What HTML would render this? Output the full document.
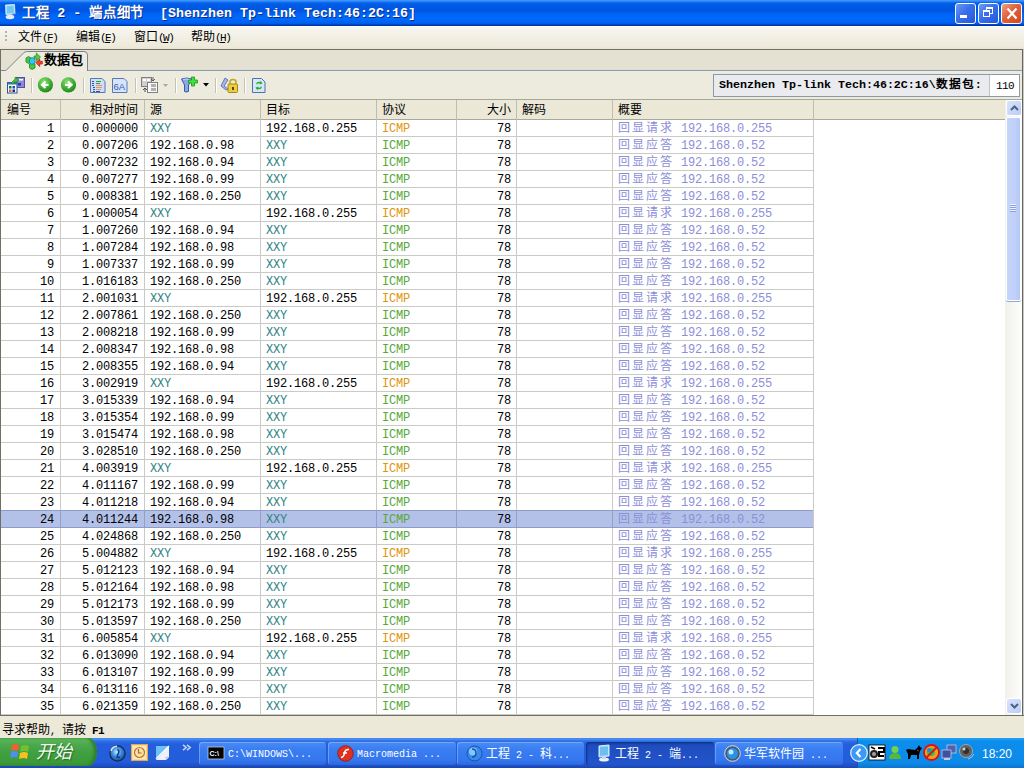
<!DOCTYPE html>
<html lang="zh-CN"><head><meta charset="utf-8">
<style>
*{margin:0;padding:0;box-sizing:border-box}
html,body{width:1024px;height:768px;overflow:hidden;background:#ECE9D8;font-family:"Liberation Mono",monospace;font-size:12px;line-height:14px;color:#000;position:relative}
.a{position:absolute;white-space:nowrap}
svg{position:absolute;overflow:visible}
#title{position:absolute;left:0;top:0;width:1024px;height:26px;background:linear-gradient(#3D95FF 0px,#3A90FE 1px,#1A72F2 2px,#0262EC 3px,#005BE2 5px,#0057DF 8px,#0056E6 11px,#0063F5 14px,#0069FC 18px,#0064F4 22px,#0058E6 24px,#0038A8 25px,#0038A8 26px)}
#title .t{position:absolute;left:22px;top:7px;color:#fff;font-weight:bold;font-size:13.33px;white-space:pre;text-shadow:1px 1px 0 #0A2A8A}
.cj{letter-spacing:0.67px}
.k{font-weight:normal;font-size:12px}
.wb{position:absolute;top:3px;width:21px;height:21px;border:1px solid #fff;border-radius:3px;background:linear-gradient(135deg,#6A9AF8 0%,#3A6FEA 45%,#2458DE 100%)}
#menu{position:absolute;left:0;top:26px;width:1024px;height:23px;background:linear-gradient(#FCFCFA 0px,#F6F5EE 3px,#F1EFE4 12px,#EEEBDC 20px,#E8E5D4 23px)}
#menu .m{position:absolute;top:5px;font-size:12px}
.mn{display:inline-block;letter-spacing:-1.5px;font-size:11px;text-decoration:none}
.dot{position:absolute;width:2px;height:2px;background:#B4B2A8}
#tabs{position:absolute;left:0;top:49px;width:1024px;height:22px;background:#E4E1D2;border-top:1px solid #716F64}
#tb{position:absolute;left:0;top:71px;width:1024px;height:28px;background:#EDEBDD}
.sep{position:absolute;top:7px;width:1px;height:15px;background:#C5C2B2;box-shadow:1px 0 0 #fff}
#hdr{position:absolute;left:1px;top:99px;width:1004px;height:21px;background:#EBE8D8;border-top:1px solid #A8A696;border-bottom:1px solid #ACA899}
#hdr i{position:absolute;top:4px;font-style:normal;white-space:nowrap;font-size:12px}
.hs{position:absolute;top:0;width:1px;height:20px;background:#C0BDAC}
#grid{position:absolute;left:1px;top:120px;width:1004px;height:595px;background:#fff;overflow:hidden}
.row{position:absolute;left:0;width:812px;height:17px;border-bottom:1px solid #CACAC6}
.row i{position:absolute;top:2px;font-style:normal;white-space:nowrap;font-size:12px;letter-spacing:-0.2px}
.sel{background:#B3C1E9;border-top:1px solid #8E9CCB;border-bottom:1px solid #8E9CCB;margin-top:-1px;height:18px}
.sel i{top:2px}
.c0{right:759px}.c1{right:675px}.c2{left:149px}.c3{left:265px}.c4{left:381px}.c5{right:302px}.c7{left:617px;color:#8C8ED8}.c7 b{font-weight:normal;letter-spacing:2px}
.xxy{color:#2E8484}.oran{color:#E0960C}.grn{color:#58A838}
.vl{position:absolute;top:0;width:1px;height:595px;background:#CACAC6;z-index:1}
.sv{position:absolute;top:-1px;width:1px;height:18px;background:#949FC8;z-index:2}
#lb{position:absolute;left:0;top:49px;width:1px;height:667px;background:#716F64}
#rb{position:absolute;left:1022px;top:49px;width:2px;height:667px;background:linear-gradient(90deg,#666662 50%,#C8C8C4 50%)}
#bb{position:absolute;left:0;top:715px;width:1024px;height:1px;background:#716F64}
#sb{position:absolute;left:1005px;top:99px;width:17px;height:616px;border-top:1px solid #A8A696;background:linear-gradient(90deg,#F1F0EA,#FEFEFC)}
.sbb{position:absolute;left:2px;width:14px;height:14px;border-radius:2px;background:linear-gradient(135deg,#D9E3FC,#BACDF8);box-shadow:0 0 0 1px #fff}
#status{position:absolute;left:0;top:716px;width:1024px;height:22px;background:#ECE9D8}
#task{position:absolute;left:0;top:738px;width:1024px;height:30px;background:linear-gradient(#3A7FF0 0px,#4A93F5 1px,#3070E8 3px,#245EDC 6px,#245DDA 24px,#1D4EC4 28px,#1A45B0 30px)}
.btn{position:absolute;top:4px;height:23px;border-radius:3px;background:linear-gradient(#4A8CF6,#3A7EF2 30%,#3476EE 80%,#2C68DC);box-shadow:inset 1px 1px 0 rgba(255,255,255,.25)}
.btn .tx{position:absolute;top:6px;color:#fff;font-size:10px}
#tray{position:absolute;left:857px;top:0;width:167px;height:30px;background:linear-gradient(#22A6F8 0px,#0C8DEC 3px,#0D8AE8 25px,#0B74D0 30px);border-left:1px solid #1750B8}
</style></head><body>
<div id="title">
<svg style="left:5px;top:4px" width="11" height="16" viewBox="0 0 11 16"><path d="M0.5 1 L9.5 0.5 L10 10 L1 10.5 Z" fill="#B0E0F8" stroke="#D8F4FF" stroke-width=".8"/><path d="M1.8 2.2 L8.5 1.8 L8.8 9 L2 9.3Z" fill="#70C8F0"/><path d="M7 10 L10 9 L9 13 Z" fill="#4050A0" opacity=".6"/><ellipse cx="5" cy="13" rx="4.3" ry="2.2" fill="#E8E8F4"/></svg>
<div class="t"><b class="cj">工程</b> 2 - <b class="cj">端点细节</b>  [Shenzhen Tp-link Tech:46:2C:16]</div>
<div class="wb" style="left:955px"><div class="a" style="left:4px;top:11px;width:7px;height:3px;background:#fff"></div></div>
<div class="wb" style="left:978px"><div class="a" style="left:7px;top:3px;width:7px;height:7px;border:1px solid #fff;border-top-width:2px"></div><div class="a" style="left:4px;top:6px;width:7px;height:7px;border:1px solid #fff;border-top-width:2px;background:#3A6FEA"></div></div>
<div class="wb" style="left:1001px;background:linear-gradient(135deg,#F0A080 0%,#E2603A 45%,#D04A22 100%)"><svg style="left:4px;top:3px" width="12" height="13"><path d="M1.5 1.5 L10.5 11.5 M10.5 1.5 L1.5 11.5" stroke="#fff" stroke-width="2.2"/></svg></div>
</div>
<div id="menu">
<div class="dot" style="left:5px;top:5px"></div><div class="dot" style="left:5px;top:9px"></div><div class="dot" style="left:5px;top:13px"></div>
<span class="m" style="left:18px">文件<span class="mn">(<u>F</u>)</span></span><span class="m" style="left:76px">编辑<span class="mn">(<u>E</u>)</span></span><span class="m" style="left:134px">窗口<span class="mn">(<u>W</u>)</span></span><span class="m" style="left:191px">帮助<span class="mn">(<u>H</u>)</span></span></div>
<div id="tabs">
<svg style="left:0;top:0" width="100" height="22"><path d="M1 20.5 L6 20.5 L23.5 3 Q25 1.5 27.5 1.5 L84 1.5 Q87.5 1.5 87.5 5 L87.5 22 L1 22 Z" fill="#EEEBDF" stroke="#7C8490" stroke-width="1"/><path d="M0 21.5 L89 21.5" stroke="#EDEBDD" stroke-width="1"/></svg>
<svg style="left:22px;top:0" width="24" height="22" viewBox="22 50 24 22"><path d="M26 58 L28.5 56.5 L31 58 L31 62 L28.5 63.5 L26 62Z" fill="#48C838" stroke="#208818" stroke-width=".8"/><path d="M29.5 64 L32 62.5 L35 64 L35 68 L32 69.5 L29.5 68Z" fill="#48C838" stroke="#208818" stroke-width=".8"/><path d="M29.5 59 L32 57.5 L35 59 L35 63 L32 64.5 L29.5 63Z" fill="#30C8F0" stroke="#1880B0" stroke-width=".8"/><path d="M34 56 L36.3 56 L36.3 53 L40.5 57 L36.3 60.8 L36.3 58.2 L34 58.2Z" fill="#50D040" stroke="#1E8A1E" stroke-width=".7"/><path d="M42.3 61.3 L39.7 61.3 L39.7 58.8 L35.8 62.6 L39.7 66.6 L39.7 64 L42.3 64Z" fill="#F04828" stroke="#A01810" stroke-width=".7"/></svg>
<span class="a" style="left:44px;top:4px;font-weight:bold;font-size:13px">数据包</span>
<div class="a" style="left:88px;top:20px;width:936px;height:1px;background:#8E9AAE"></div><div class="a" style="left:88px;top:19px;width:936px;height:1px;background:#DCDED8"></div>
</div>
<div id="tb">
<svg style="left:7px;top:6px" width="18" height="17" viewBox="0 0 18 17"><rect x="9.5" y="0.5" width="8" height="10" fill="#8A8AD8" stroke="#5050A8"/><rect x="12" y="2" width="4" height="1.5" fill="#fff"/><rect x="11" y="6" width="3" height="2.5" fill="#3838A0"/><rect x="0.5" y="5.5" width="9.5" height="10.5" fill="#F4F8FF" stroke="#3050A0"/><rect x="0.5" y="5.5" width="9.5" height="2" fill="#4A6AC8"/><rect x="2" y="9" width="2.5" height="2.5" fill="#108040"/><rect x="5.5" y="9" width="2.5" height="2.5" fill="#2050C0"/><rect x="2" y="12.5" width="2.5" height="2.5" fill="#D07050"/><rect x="5.5" y="12.5" width="2.5" height="2.5" fill="#182880"/><path d="M4 6 L8 2 L8 0 L12 3 L8 6.5 L8 4.5 L6 7Z" fill="#40C040" stroke="#208020" stroke-width=".6"/></svg>
<div class="sep" style="left:31px"></div>
<svg style="left:37px;top:6px" width="17" height="16" viewBox="0 0 17 16"><defs><radialGradient id="gg" cx=".4" cy=".3" r=".8"><stop offset="0" stop-color="#8CE070"/><stop offset=".6" stop-color="#38A830"/><stop offset="1" stop-color="#1C7A18"/></radialGradient></defs><circle cx="8.4" cy="7.8" r="7.6" fill="url(#gg)"/><path d="M11.5 7.8 H5.5 M8.5 4.5 L5 7.8 L8.5 11" stroke="#fff" stroke-width="2.2" fill="none"/></svg>
<svg style="left:60px;top:6px" width="17" height="16" viewBox="0 0 17 16"><circle cx="8.5" cy="7.8" r="7.6" fill="url(#gg)"/><path d="M5 7.8 H11 M8 4.5 L11.5 7.8 L8 11" stroke="#fff" stroke-width="2.2" fill="none"/></svg>
<div class="sep" style="left:83px"></div>
<svg style="left:90px;top:7px" width="16" height="15" viewBox="0 0 16 15"><path d="M0.5 0.5 H12 L15 3.5 V14.5 H0.5Z" fill="#CCE0FA" stroke="#5A78B0"/><path d="M2 3.5h2M2 5.5h2M2 7.5h2M3 9.5h2M3 11.5h2M3 13.5h2M6 13.5h4" stroke="#3050A0" fill="none"/><path d="M6 3.5h5M6 5.5h4" stroke="#30A040" fill="none"/><path d="M6 7.5h6M6 9.5h6M6 11.5h5" stroke="#E89060" fill="none"/></svg>
<svg style="left:112px;top:7px" width="16" height="15" viewBox="0 0 16 15"><path d="M0.5 0.5 H12 L15 3.5 V14.5 H0.5Z" fill="#D4E4FC" stroke="#5A78B0"/><text x="1.5" y="11.5" font-family="Liberation Sans" font-size="9.5" fill="#3A5AB0">6A</text></svg>
<div class="sep" style="left:135px"></div>
<svg style="left:141px;top:6px" width="17" height="16" viewBox="0 0 17 16"><rect x="0.5" y="0.5" width="10" height="9" fill="#D0D0D0" stroke="#808080"/><rect x="2" y="2" width="3" height="2" fill="#fff"/><rect x="6" y="2" width="3" height="2" fill="#fff"/><rect x="6.5" y="5.5" width="10" height="10" fill="#F8F8F8" stroke="#808080"/><rect x="10" y="7" width="5" height="3" fill="#B0B0B0"/><rect x="10" y="11" width="5" height="3" fill="#B0B0B0"/><path d="M12 0 V4 M10 2 L12 4 L14 2" stroke="#606060" fill="none"/><path d="M4 15 V11 M2 13 L4 11 L6 13" stroke="#505050" fill="none"/></svg>
<svg style="left:163px;top:13px" width="6" height="3"><path d="M0 0 H5 L2.5 3Z" fill="#A8A8A0"/></svg>
<div class="sep" style="left:175px"></div>
<svg style="left:181px;top:5px" width="17" height="17" viewBox="0 0 17 17"><path d="M0.5 3 Q5 1 11 3 L7.5 9 V15.5 Q5 16.5 3.5 15.5 V9 Z" fill="#8AA8E8" stroke="#3A5AA8"/><path d="M2 3.5 Q5 2.5 9 3.5" stroke="#C0D8FF" fill="none"/><path d="M10.5 1 H13.5 V4 H16.5 V7 H13.5 V10 H10.5 V7 H7.5 V4 H10.5Z" fill="#40E040" stroke="#189818" stroke-width=".8"/></svg>
<svg style="left:203px;top:12px" width="6" height="4"><path d="M0 0 H6 L3 3.5Z" fill="#000"/></svg>
<div class="sep" style="left:215px"></div>
<svg style="left:220px;top:6px" width="18" height="16" viewBox="0 0 18 16"><path d="M5 1 L8 3 L4 9 L8 12 L6 13 L1 9 Z" fill="#A8B8E8" stroke="#5060A8" stroke-width=".8"/><path d="M10 7 V5 Q10 2.5 13 2.5 Q16 2.5 16 5 V7" stroke="#C8A818" stroke-width="1.6" fill="none"/><rect x="8" y="7" width="9.5" height="8.5" rx="1" fill="#E8D040" stroke="#A88810"/><path d="M12 10h2v3h-2z" fill="#604800"/></svg>
<div class="sep" style="left:244px"></div>
<svg style="left:252px;top:7px" width="14" height="15" viewBox="0 0 14 15"><path d="M0.5 0.5 H9.5 L13 4 V14.5 H0.5Z" fill="#D8E6FA" stroke="#5070B0"/><path d="M4 6 Q5 3 8.5 4 L8.5 2.5 L10.5 5.5 L7 6.5 L8 5.5 Q6 4.5 5 6.5Z" fill="#20B020"/><path d="M10 9 Q9 12 5.5 11 L5.5 12.5 L3.5 9.5 L7 8.5 L6 9.5 Q8 10.5 9 8.5Z" fill="#20B020"/></svg>

<div class="a" style="left:713px;top:3px;width:307px;height:23px;background:#E9EBEF;border:1px solid #8C9AA6"></div>
<div class="a" style="left:989px;top:4px;width:30px;height:21px;background:#fff;border-left:1px solid #B8C2CC"></div>
<span class="a" style="left:719px;top:7px;font-weight:bold;font-size:11.67px">Shenzhen Tp-link Tech:46:2C:16\<b style="letter-spacing:1px">数据包</b>:</span>
<span class="a" style="left:996px;top:8px;font-size:11px;letter-spacing:-0.6px">110</span>
</div>
<div id="hdr"><i style="left:6px">编号</i><i style="right:867px">相对时间</i><i style="left:149px">源</i><i style="left:265px">目标</i><i style="left:381px">协议</i><i style="right:494px">大小</i><i style="left:521px">解码</i><i style="left:617px">概要</i>
<div class="hs" style="left:59px"></div><div class="hs" style="left:143px"></div><div class="hs" style="left:259px"></div><div class="hs" style="left:375px"></div><div class="hs" style="left:455px"></div><div class="hs" style="left:515px"></div><div class="hs" style="left:611px"></div><div class="hs" style="left:812px"></div>
</div>
<div id="grid">
<div class="vl" style="left:59px"></div><div class="vl" style="left:143px"></div><div class="vl" style="left:259px"></div><div class="vl" style="left:375px"></div><div class="vl" style="left:455px"></div><div class="vl" style="left:515px"></div><div class="vl" style="left:611px"></div><div class="vl" style="left:812px"></div>
<div class="row" style="top:0px"><i class="c0">1</i><i class="c1">0.000000</i><i class="c2"><span class="xxy">XXY</span></i><i class="c3">192.168.0.255</i><i class="c4"><span class="oran">ICMP</span></i><i class="c5">78</i><i class="c7"><b>回显请求</b> 192.168.0.255</i></div>
<div class="row" style="top:17px"><i class="c0">2</i><i class="c1">0.007206</i><i class="c2">192.168.0.98</i><i class="c3"><span class="xxy">XXY</span></i><i class="c4"><span class="grn">ICMP</span></i><i class="c5">78</i><i class="c7"><b>回显应答</b> 192.168.0.52</i></div>
<div class="row" style="top:34px"><i class="c0">3</i><i class="c1">0.007232</i><i class="c2">192.168.0.94</i><i class="c3"><span class="xxy">XXY</span></i><i class="c4"><span class="grn">ICMP</span></i><i class="c5">78</i><i class="c7"><b>回显应答</b> 192.168.0.52</i></div>
<div class="row" style="top:51px"><i class="c0">4</i><i class="c1">0.007277</i><i class="c2">192.168.0.99</i><i class="c3"><span class="xxy">XXY</span></i><i class="c4"><span class="grn">ICMP</span></i><i class="c5">78</i><i class="c7"><b>回显应答</b> 192.168.0.52</i></div>
<div class="row" style="top:68px"><i class="c0">5</i><i class="c1">0.008381</i><i class="c2">192.168.0.250</i><i class="c3"><span class="xxy">XXY</span></i><i class="c4"><span class="grn">ICMP</span></i><i class="c5">78</i><i class="c7"><b>回显应答</b> 192.168.0.52</i></div>
<div class="row" style="top:85px"><i class="c0">6</i><i class="c1">1.000054</i><i class="c2"><span class="xxy">XXY</span></i><i class="c3">192.168.0.255</i><i class="c4"><span class="oran">ICMP</span></i><i class="c5">78</i><i class="c7"><b>回显请求</b> 192.168.0.255</i></div>
<div class="row" style="top:102px"><i class="c0">7</i><i class="c1">1.007260</i><i class="c2">192.168.0.94</i><i class="c3"><span class="xxy">XXY</span></i><i class="c4"><span class="grn">ICMP</span></i><i class="c5">78</i><i class="c7"><b>回显应答</b> 192.168.0.52</i></div>
<div class="row" style="top:119px"><i class="c0">8</i><i class="c1">1.007284</i><i class="c2">192.168.0.98</i><i class="c3"><span class="xxy">XXY</span></i><i class="c4"><span class="grn">ICMP</span></i><i class="c5">78</i><i class="c7"><b>回显应答</b> 192.168.0.52</i></div>
<div class="row" style="top:136px"><i class="c0">9</i><i class="c1">1.007337</i><i class="c2">192.168.0.99</i><i class="c3"><span class="xxy">XXY</span></i><i class="c4"><span class="grn">ICMP</span></i><i class="c5">78</i><i class="c7"><b>回显应答</b> 192.168.0.52</i></div>
<div class="row" style="top:153px"><i class="c0">10</i><i class="c1">1.016183</i><i class="c2">192.168.0.250</i><i class="c3"><span class="xxy">XXY</span></i><i class="c4"><span class="grn">ICMP</span></i><i class="c5">78</i><i class="c7"><b>回显应答</b> 192.168.0.52</i></div>
<div class="row" style="top:170px"><i class="c0">11</i><i class="c1">2.001031</i><i class="c2"><span class="xxy">XXY</span></i><i class="c3">192.168.0.255</i><i class="c4"><span class="oran">ICMP</span></i><i class="c5">78</i><i class="c7"><b>回显请求</b> 192.168.0.255</i></div>
<div class="row" style="top:187px"><i class="c0">12</i><i class="c1">2.007861</i><i class="c2">192.168.0.250</i><i class="c3"><span class="xxy">XXY</span></i><i class="c4"><span class="grn">ICMP</span></i><i class="c5">78</i><i class="c7"><b>回显应答</b> 192.168.0.52</i></div>
<div class="row" style="top:204px"><i class="c0">13</i><i class="c1">2.008218</i><i class="c2">192.168.0.99</i><i class="c3"><span class="xxy">XXY</span></i><i class="c4"><span class="grn">ICMP</span></i><i class="c5">78</i><i class="c7"><b>回显应答</b> 192.168.0.52</i></div>
<div class="row" style="top:221px"><i class="c0">14</i><i class="c1">2.008347</i><i class="c2">192.168.0.98</i><i class="c3"><span class="xxy">XXY</span></i><i class="c4"><span class="grn">ICMP</span></i><i class="c5">78</i><i class="c7"><b>回显应答</b> 192.168.0.52</i></div>
<div class="row" style="top:238px"><i class="c0">15</i><i class="c1">2.008355</i><i class="c2">192.168.0.94</i><i class="c3"><span class="xxy">XXY</span></i><i class="c4"><span class="grn">ICMP</span></i><i class="c5">78</i><i class="c7"><b>回显应答</b> 192.168.0.52</i></div>
<div class="row" style="top:255px"><i class="c0">16</i><i class="c1">3.002919</i><i class="c2"><span class="xxy">XXY</span></i><i class="c3">192.168.0.255</i><i class="c4"><span class="oran">ICMP</span></i><i class="c5">78</i><i class="c7"><b>回显请求</b> 192.168.0.255</i></div>
<div class="row" style="top:272px"><i class="c0">17</i><i class="c1">3.015339</i><i class="c2">192.168.0.94</i><i class="c3"><span class="xxy">XXY</span></i><i class="c4"><span class="grn">ICMP</span></i><i class="c5">78</i><i class="c7"><b>回显应答</b> 192.168.0.52</i></div>
<div class="row" style="top:289px"><i class="c0">18</i><i class="c1">3.015354</i><i class="c2">192.168.0.99</i><i class="c3"><span class="xxy">XXY</span></i><i class="c4"><span class="grn">ICMP</span></i><i class="c5">78</i><i class="c7"><b>回显应答</b> 192.168.0.52</i></div>
<div class="row" style="top:306px"><i class="c0">19</i><i class="c1">3.015474</i><i class="c2">192.168.0.98</i><i class="c3"><span class="xxy">XXY</span></i><i class="c4"><span class="grn">ICMP</span></i><i class="c5">78</i><i class="c7"><b>回显应答</b> 192.168.0.52</i></div>
<div class="row" style="top:323px"><i class="c0">20</i><i class="c1">3.028510</i><i class="c2">192.168.0.250</i><i class="c3"><span class="xxy">XXY</span></i><i class="c4"><span class="grn">ICMP</span></i><i class="c5">78</i><i class="c7"><b>回显应答</b> 192.168.0.52</i></div>
<div class="row" style="top:340px"><i class="c0">21</i><i class="c1">4.003919</i><i class="c2"><span class="xxy">XXY</span></i><i class="c3">192.168.0.255</i><i class="c4"><span class="oran">ICMP</span></i><i class="c5">78</i><i class="c7"><b>回显请求</b> 192.168.0.255</i></div>
<div class="row" style="top:357px"><i class="c0">22</i><i class="c1">4.011167</i><i class="c2">192.168.0.99</i><i class="c3"><span class="xxy">XXY</span></i><i class="c4"><span class="grn">ICMP</span></i><i class="c5">78</i><i class="c7"><b>回显应答</b> 192.168.0.52</i></div>
<div class="row" style="top:374px"><i class="c0">23</i><i class="c1">4.011218</i><i class="c2">192.168.0.94</i><i class="c3"><span class="xxy">XXY</span></i><i class="c4"><span class="grn">ICMP</span></i><i class="c5">78</i><i class="c7"><b>回显应答</b> 192.168.0.52</i></div>
<div class="row sel" style="top:391px"><i class="c0">24</i><i class="c1">4.011244</i><i class="c2">192.168.0.98</i><i class="c3"><span class="xxy">XXY</span></i><i class="c4"><span class="grn">ICMP</span></i><i class="c5">78</i><i class="c7"><b>回显应答</b> 192.168.0.52</i><div class="sv" style="left:59px"></div><div class="sv" style="left:143px"></div><div class="sv" style="left:259px"></div><div class="sv" style="left:375px"></div><div class="sv" style="left:455px"></div><div class="sv" style="left:515px"></div><div class="sv" style="left:611px"></div></div>
<div class="row" style="top:408px"><i class="c0">25</i><i class="c1">4.024868</i><i class="c2">192.168.0.250</i><i class="c3"><span class="xxy">XXY</span></i><i class="c4"><span class="grn">ICMP</span></i><i class="c5">78</i><i class="c7"><b>回显应答</b> 192.168.0.52</i></div>
<div class="row" style="top:425px"><i class="c0">26</i><i class="c1">5.004882</i><i class="c2"><span class="xxy">XXY</span></i><i class="c3">192.168.0.255</i><i class="c4"><span class="oran">ICMP</span></i><i class="c5">78</i><i class="c7"><b>回显请求</b> 192.168.0.255</i></div>
<div class="row" style="top:442px"><i class="c0">27</i><i class="c1">5.012123</i><i class="c2">192.168.0.94</i><i class="c3"><span class="xxy">XXY</span></i><i class="c4"><span class="grn">ICMP</span></i><i class="c5">78</i><i class="c7"><b>回显应答</b> 192.168.0.52</i></div>
<div class="row" style="top:459px"><i class="c0">28</i><i class="c1">5.012164</i><i class="c2">192.168.0.98</i><i class="c3"><span class="xxy">XXY</span></i><i class="c4"><span class="grn">ICMP</span></i><i class="c5">78</i><i class="c7"><b>回显应答</b> 192.168.0.52</i></div>
<div class="row" style="top:476px"><i class="c0">29</i><i class="c1">5.012173</i><i class="c2">192.168.0.99</i><i class="c3"><span class="xxy">XXY</span></i><i class="c4"><span class="grn">ICMP</span></i><i class="c5">78</i><i class="c7"><b>回显应答</b> 192.168.0.52</i></div>
<div class="row" style="top:493px"><i class="c0">30</i><i class="c1">5.013597</i><i class="c2">192.168.0.250</i><i class="c3"><span class="xxy">XXY</span></i><i class="c4"><span class="grn">ICMP</span></i><i class="c5">78</i><i class="c7"><b>回显应答</b> 192.168.0.52</i></div>
<div class="row" style="top:510px"><i class="c0">31</i><i class="c1">6.005854</i><i class="c2"><span class="xxy">XXY</span></i><i class="c3">192.168.0.255</i><i class="c4"><span class="oran">ICMP</span></i><i class="c5">78</i><i class="c7"><b>回显请求</b> 192.168.0.255</i></div>
<div class="row" style="top:527px"><i class="c0">32</i><i class="c1">6.013090</i><i class="c2">192.168.0.94</i><i class="c3"><span class="xxy">XXY</span></i><i class="c4"><span class="grn">ICMP</span></i><i class="c5">78</i><i class="c7"><b>回显应答</b> 192.168.0.52</i></div>
<div class="row" style="top:544px"><i class="c0">33</i><i class="c1">6.013107</i><i class="c2">192.168.0.99</i><i class="c3"><span class="xxy">XXY</span></i><i class="c4"><span class="grn">ICMP</span></i><i class="c5">78</i><i class="c7"><b>回显应答</b> 192.168.0.52</i></div>
<div class="row" style="top:561px"><i class="c0">34</i><i class="c1">6.013116</i><i class="c2">192.168.0.98</i><i class="c3"><span class="xxy">XXY</span></i><i class="c4"><span class="grn">ICMP</span></i><i class="c5">78</i><i class="c7"><b>回显应答</b> 192.168.0.52</i></div>
<div class="row" style="top:578px"><i class="c0">35</i><i class="c1">6.021359</i><i class="c2">192.168.0.250</i><i class="c3"><span class="xxy">XXY</span></i><i class="c4"><span class="grn">ICMP</span></i><i class="c5">78</i><i class="c7"><b>回显应答</b> 192.168.0.52</i></div>
</div>
<div id="sb">
<div class="sbb" style="top:1px"><svg style="left:3px;top:4px" width="9" height="6"><path d="M1 5 L4.5 1.5 L8 5" stroke="#4D6185" stroke-width="2" fill="none"/></svg></div>
<div class="a" style="left:1px;top:17px;width:15px;height:184px;border-radius:2px;background:linear-gradient(90deg,#C6D4F8,#BFD0FA 60%,#B4C8F8);border:1px solid #fff;box-shadow:0 1px 0 #9AA8C8"><div class="a" style="left:3px;top:86px;width:6px;height:1px;background:#EEF2FE;box-shadow:0 1px 0 #8CA0D8,0 2px 0 #EEF2FE,0 3px 0 #8CA0D8,0 4px 0 #EEF2FE,0 5px 0 #8CA0D8,0 6px 0 #EEF2FE,0 7px 0 #8CA0D8"></div></div>
<div class="sbb" style="top:599px"><svg style="left:3px;top:4px" width="9" height="6"><path d="M1 1 L4.5 4.5 L8 1" stroke="#4D6185" stroke-width="2" fill="none"/></svg></div>
</div>
<div id="lb"></div><div id="rb"></div><div id="bb"></div>
<div id="status"><span class="a" style="left:2px;top:8px;font-size:10px"><b class="k">寻求帮助</b>, <b class="k">请按</b> <b style="font-size:11px;letter-spacing:-0.6px">F1</b></span></div>
<div id="task">
<div class="a" style="left:0;top:0;width:97px;height:28px;border-radius:0 9px 9px 0 / 0 14px 14px 0;background:linear-gradient(#62B862 0px,#5AB45A 2px,#4CAA4C 6px,#41A041 14px,#3C9C3A 22px,#3A9636 28px);box-shadow:inset -3px 0 3px #2E7E2E"></div>
<svg style="left:10px;top:5px" width="20" height="18" viewBox="0 0 20 18"><path d="M2 2 Q5 0 9 2 L8 8 Q5 6 1 8Z" fill="#F06030"/><path d="M11 3 Q14 1 19 3 L18 9 Q14 7 10 9Z" fill="#70C030"/><path d="M1 9 Q4 7 8 9 L7 15 Q4 13 0 15Z" fill="#4A90F0"/><path d="M10 10 Q14 8 18 10 L17 16 Q14 14 9 16Z" fill="#F8C020"/></svg>
<span class="a" style="left:36px;top:7px;color:#F4FAF4;font-style:italic;font-size:18px;font-family:'Liberation Sans',sans-serif;text-shadow:1px 1px 1px rgba(20,70,20,.6);font-weight:300">开始</span>
<svg style="left:109px;top:7px" width="17" height="17" viewBox="0 0 17 17"><defs><radialGradient id="ie" cx=".45" cy=".4" r=".6"><stop offset="0" stop-color="#C8E8FF"/><stop offset=".5" stop-color="#3A90E0"/><stop offset="1" stop-color="#1A4A90"/></radialGradient></defs><circle cx="8.5" cy="8.5" r="7.6" fill="url(#ie)" stroke="#1A2848" stroke-width="1.2"/><path d="M2 6 Q3 1.5 8 1.3" stroke="#E0E8F0" stroke-width="1.4" fill="none"/><path d="M8.5 4.5 Q11 6 9 9 L8 12 L11 12.5" stroke="#0A3A90" stroke-width="1.5" fill="none"/></svg>
<svg style="left:131px;top:6px" width="17" height="17" viewBox="0 0 17 17"><rect x="0.5" y="0.5" width="16" height="16" fill="#FCD898" stroke="#E8A848"/><rect x="2" y="2" width="13" height="13" fill="#FDE8C0"/><circle cx="8.5" cy="8.5" r="5" fill="#FCE0A8" stroke="#B87828" stroke-width="1.2"/><path d="M7.5 5 V9 H10.5" stroke="#A86818" stroke-width="1.2" fill="none"/></svg>
<svg style="left:155px;top:7px" width="16" height="16" viewBox="0 0 16 16"><path d="M1 1 H14 L1 14Z" fill="#70C0F8"/><path d="M14 1 V12 L11 15 H1Z" fill="#F0F0FA"/><path d="M1 14 L14 1" stroke="#fff" stroke-width="1.2"/><path d="M11 15 V12 H14" fill="#D0D8E8" stroke="#B0B8D0" stroke-width=".6"/></svg>
<svg style="left:182px;top:6px" width="10" height="7"><path d="M1 0.8 L4.2 3.5 L1 6.2 M5 0.8 L8.2 3.5 L5 6.2" stroke="#BCD4FA" stroke-width="1.6" fill="none"/></svg>
<div class="btn" style="left:199px;width:127px"><svg style="left:9px;top:5px" width="16" height="12"><rect x="0" y="0" width="16" height="12" fill="#000" stroke="#C0C8D8" stroke-width=".8"/><text x="1.5" y="9" font-family="Liberation Sans" font-size="7" font-weight="bold" fill="#fff">C:\</text></svg><span class="tx" style="left:29px">C:\WINDOWS\...</span></div>
<div class="btn" style="left:328px;width:128px"><svg style="left:9px;top:3px" width="17" height="17"><circle cx="8.5" cy="8.5" r="7.8" fill="#E03020" stroke="#901810" stroke-width=".8"/><path d="M12 4.5 Q8 4 7.5 8 Q7 12 4 12.5 M6 8 H10" stroke="#fff" stroke-width="1.6" fill="none"/></svg><span class="tx" style="left:29px">Macromedia ...</span></div>
<div class="btn" style="left:457px;width:127px"><svg style="left:9px;top:3px" width="17" height="17"><circle cx="8.5" cy="8.5" r="7.5" fill="#3A8AE8" stroke="#1A50B0" stroke-width="1"/><circle cx="7" cy="6.5" r="4" fill="#80C8FF"/><path d="M6 4 Q10 4 10 8 Q10 12 6 12" stroke="#1850A8" stroke-width="1.5" fill="none"/></svg><span class="tx" style="left:29px"><b class="k">工程</b> 2 - <b class="k">科</b>...</span></div>
<div class="btn" style="left:586px;width:128px;background:linear-gradient(#1A44B0,#1E4EC0 20%,#2152C8 80%,#2356CC);box-shadow:inset 1px 1px 2px #10307A"><svg style="left:12px;top:3px" width="13" height="17" viewBox="0 0 13 17"><path d="M1 1 L11 0 L11 11 L1 12 Z" fill="#A8D8F8" stroke="#D8F0FF" stroke-width="1"/><path d="M2 2 L10 1.5 L10 10 L2 10.8Z" fill="#6CC0F0"/><ellipse cx="6" cy="14.5" rx="5" ry="2" fill="#E8F0F8"/><rect x="4" y="11" width="4" height="3" fill="#C8D8E8"/></svg><span class="tx" style="left:29px"><b class="k">工程</b> 2 - <b class="k">端</b>...</span></div>
<div class="btn" style="left:715px;width:128px"><svg style="left:9px;top:3px" width="17" height="17"><circle cx="8.5" cy="8.5" r="7.8" fill="#4A5A68" stroke="#D8E0E8" stroke-width="1"/><circle cx="8.5" cy="8.5" r="5.5" fill="#2A90E8"/><circle cx="7" cy="7" r="2.5" fill="#C0E8FF"/></svg><span class="tx" style="left:29px"><b class="k">华军软件园</b> ...</span></div>
<div id="tray"><svg style="left:-8px;top:6px" width="18" height="18" viewBox="0 0 18 18"><circle cx="9" cy="9" r="8.3" fill="#3A98F8" stroke="#E8F4FF" stroke-width="1.2"/><path d="M10.5 5 L6.8 9 L10.5 13" stroke="#fff" stroke-width="2.2" fill="none"/></svg>
<svg style="left:11px;top:7px" width="16" height="15" viewBox="0 0 16 15"><rect x="0" y="0" width="16" height="15" fill="#fff" stroke="#000" stroke-width=".8"/><circle cx="5" cy="9" r="4" fill="#202020"/><circle cx="5" cy="9" r="2" fill="#A0A0A0"/><path d="M9 3 H15 V7 H10 V11 H15" stroke="#000" stroke-width="2" fill="none"/><path d="M2 2 L6 4" stroke="#000" stroke-width="1.5"/></svg>
<svg style="left:30px;top:7px" width="14" height="15" viewBox="0 0 14 15"><circle cx="7" cy="4.5" r="3.5" fill="#70D050"/><path d="M1 14 Q1 8 7 8 Q13 8 13 14Z" fill="#58B838"/></svg>
<svg style="left:47px;top:7px" width="17" height="14" viewBox="0 0 17 14"><path d="M1 5 L3 4 L10 5 L13 2 L14 0 L15 2 L17 3 L15 6 L14 10 L14 14 L12 14 L12 10 L6 10 L5 14 L3 14 L3 9 Z" fill="#000"/><path d="M12 5 L14 6" stroke="#E02020"/></svg>
<svg style="left:65px;top:6px" width="17" height="17" viewBox="0 0 17 17"><circle cx="8.5" cy="8.5" r="7" fill="#F0A020"/><circle cx="8" cy="8" r="4" fill="#30C050"/><circle cx="6" cy="6" r="2" fill="#3080E0"/><circle cx="8.5" cy="8.5" r="7.5" fill="none" stroke="#E01010" stroke-width="1.8"/><path d="M3 14 L14 3" stroke="#E01010" stroke-width="1.8"/></svg>
<svg style="left:83px;top:6px" width="16" height="17" viewBox="0 0 16 17"><rect x="6" y="1" width="9" height="8" fill="#5060B0" stroke="#C0C8E0" stroke-width=".8"/><rect x="1" y="6" width="9" height="8" fill="#4050A0" stroke="#C0C8E0" stroke-width=".8"/><rect x="3" y="14" width="6" height="2" fill="#C8C8D8"/></svg>
<svg style="left:101px;top:6px" width="17" height="17" viewBox="0 0 17 17"><circle cx="7" cy="7" r="6.5" fill="#606060" stroke="#A0A8B0"/><circle cx="7" cy="7" r="3" fill="#303030"/><circle cx="5" cy="5" r="1.5" fill="#D0D0D0"/><path d="M9 15 Q13 14 15 10" stroke="#A8C8F0" stroke-width="1" fill="none"/></svg>
<span class="a" style="left:124px;top:9px;color:#fff;font-size:12px;font-family:'Liberation Sans',sans-serif">18:20</span>
</div>
</div>
</body></html>
